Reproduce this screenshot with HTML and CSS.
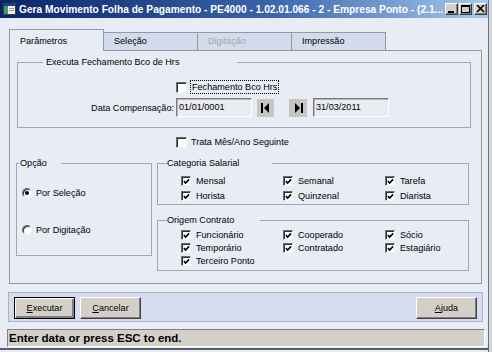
FILE: index.html
```html
<!DOCTYPE html>
<html lang="pt">
<head>
<meta charset="utf-8">
<title>Gera Movimento Folha de Pagamento</title>
<link rel="stylesheet" href="styles.css">
</head>
<body>
<div class="window">
  <div class="titlebar">
    <svg class="appicon" width="13" height="12" viewBox="0 0 13 12">
      <rect x="0.5" y="0.5" width="12" height="11" fill="#f4f4f4" stroke="#3c3c3c"/>
      <rect x="1" y="1" width="11" height="2" fill="#1c3c8c"/>
      <rect x="1" y="3" width="4" height="8" fill="#3f9a6a"/>
      <rect x="6" y="5" width="5" height="1" fill="#9a9a9a"/>
      <rect x="6" y="7" width="5" height="1" fill="#9a9a9a"/>
    </svg>
    <span class="title">Gera Movimento Folha de Pagamento - PE4000 - 1.02.01.066 - 2 - Empresa Ponto - (2.1...</span>
    <div class="ctrls">
      <span class="ctl"><svg width="9" height="8" viewBox="0 0 9 8"><rect x="1" y="6" width="6" height="2" fill="#000"/></svg></span>
      <span class="ctl"><svg width="9" height="8" viewBox="0 0 9 8"><rect x="0.5" y="0.5" width="8" height="7" fill="none" stroke="#000"/><rect x="0" y="0" width="9" height="2" fill="#000"/></svg></span>
      <span class="ctl ctl-close"><svg width="9" height="8" viewBox="0 0 9 8"><path d="M1 0 L8 7 M8 0 L1 7" stroke="#000" stroke-width="1.6"/></svg></span>
    </div>
  </div>

  <div class="client">
    <div class="tabs">
      <div class="tab active">Parâmetros</div>
      <div class="tab">Seleção</div>
      <div class="tab disabled">Digitação</div>
      <div class="tab">Impressão</div>
    </div>

    <div class="panel">
      <div class="group g-exec">
        <span class="legend lg-exec">Executa Fechamento Bco de Hrs</span>
        <div class="exec-grid">
          <span></span>
          <label class="chk big"><span class="cb"></span><span class="focus">Fechamento Bco Hrs</span></label>
          <span class="lbl">Data Compensação:</span>
          <div class="daterow">
            <span class="field">01/01/0001</span>
            <span class="navbtn nav-first"><svg width="9" height="10" viewBox="0 0 9 10"><rect x="0" y="0" width="2" height="10" fill="#000"/><path d="M8 0 L3 5 L8 10 Z" fill="#000"/></svg></span>
            <span class="navbtn nav-last"><svg width="9" height="10" viewBox="0 0 9 10"><path d="M1 0 L6 5 L1 10 Z" fill="#000"/><rect x="7" y="0" width="2" height="10" fill="#000"/></svg></span>
            <span class="field">31/03/2011</span>
          </div>
        </div>
      </div>

      <label class="chk big trata"><span class="cb"></span>Trata Mês/Ano Seguinte</label>

      <div class="lower">
        <div class="group g-opcao">
          <span class="legend lg-opcao">Opção</span>
          <label class="radio"><span class="rb on"></span>Por Seleção</label>
          <label class="radio"><span class="rb"></span>Por Digitação</label>
        </div>

        <div class="rightcol">
          <div class="group g-cat">
            <span class="legend lg-cat">Categoria Salarial</span>
            <div class="chkgrid rows-cat">
              <label class="chk"><span class="cb on"><svg viewBox="0 0 8 8"><path d="M1 3.6 L3 5.8 L7 1.6" /></svg></span>Mensal</label>
              <label class="chk"><span class="cb on"><svg viewBox="0 0 8 8"><path d="M1 3.6 L3 5.8 L7 1.6" /></svg></span>Semanal</label>
              <label class="chk"><span class="cb on"><svg viewBox="0 0 8 8"><path d="M1 3.6 L3 5.8 L7 1.6" /></svg></span>Tarefa</label>
              <label class="chk"><span class="cb on"><svg viewBox="0 0 8 8"><path d="M1 3.6 L3 5.8 L7 1.6" /></svg></span>Horista</label>
              <label class="chk"><span class="cb on"><svg viewBox="0 0 8 8"><path d="M1 3.6 L3 5.8 L7 1.6" /></svg></span>Quinzenal</label>
              <label class="chk"><span class="cb on"><svg viewBox="0 0 8 8"><path d="M1 3.6 L3 5.8 L7 1.6" /></svg></span>Diarista</label>
            </div>
          </div>

          <div class="group g-orig">
            <span class="legend lg-orig">Origem Contrato</span>
            <div class="chkgrid rows-orig">
              <label class="chk"><span class="cb on"><svg viewBox="0 0 8 8"><path d="M1 3.6 L3 5.8 L7 1.6" /></svg></span>Funcionário</label>
              <label class="chk"><span class="cb on"><svg viewBox="0 0 8 8"><path d="M1 3.6 L3 5.8 L7 1.6" /></svg></span>Cooperado</label>
              <label class="chk"><span class="cb on"><svg viewBox="0 0 8 8"><path d="M1 3.6 L3 5.8 L7 1.6" /></svg></span>Sócio</label>
              <label class="chk"><span class="cb on"><svg viewBox="0 0 8 8"><path d="M1 3.6 L3 5.8 L7 1.6" /></svg></span>Temporário</label>
              <label class="chk"><span class="cb on"><svg viewBox="0 0 8 8"><path d="M1 3.6 L3 5.8 L7 1.6" /></svg></span>Contratado</label>
              <label class="chk"><span class="cb on"><svg viewBox="0 0 8 8"><path d="M1 3.6 L3 5.8 L7 1.6" /></svg></span>Estagiário</label>
              <label class="chk"><span class="cb on"><svg viewBox="0 0 8 8"><path d="M1 3.6 L3 5.8 L7 1.6" /></svg></span>Terceiro Ponto</label>
            </div>
          </div>
        </div>
      </div>
    </div>

    <div class="buttonbar">
      <button class="btn default"><u>E</u>xecutar</button>
      <button class="btn"><u>C</u>ancelar</button>
      <span class="spacer"></span>
      <button class="btn"><u>A</u>juda</button>
    </div>

    <div class="status">Enter data or press ESC to end.</div>
    <div class="bottomedge"></div>
  </div>
</div>
</body>
</html>
```

FILE: styles.css
```css
* { box-sizing: border-box; }

html, body {
  margin: 0;
  padding: 0;
}

body {
  width: 492px;
  height: 352px;
  overflow: hidden;
  background: #d8dbe0;
  font-family: "Liberation Sans", Arial, sans-serif;
  font-size: 9.1px;
  color: #000;
}

.window {
  width: 492px;
  height: 352px;
  display: flex;
  flex-direction: column;
  background: #e8ecf4;
  border-right: 3px solid #d4d7dc;
  box-shadow: inset -1px 0 0 #6c7078;
  overflow: hidden;
}

/* ---------- title bar ---------- */
.titlebar {
  height: 18px;
  display: flex;
  align-items: center;
  padding-left: 3px;
  margin-right: 1px;
  background: linear-gradient(to right, #0a246a 0%, #3a64a8 55%, #a6caf0 100%);
}

.appicon {
  flex: none;
  margin-right: 3px;
}

.title {
  flex: 1;
  min-width: 0;
  white-space: nowrap;
  overflow: hidden;
  color: #fff;
  font-weight: bold;
  font-size: 10.2px;
}

.ctrls {
  display: flex;
  margin-right: 1px;
}

.ctl {
  width: 13px;
  height: 12px;
  display: flex;
  align-items: center;
  justify-content: center;
  background: #d4d0c8;
  border: 1px solid;
  border-color: #ffffff #404040 #404040 #ffffff;
  box-shadow: inset -1px -1px 0 #808080;
  margin-left: 1px;
}

.ctl-close {
  margin-left: 2px;
}

/* ---------- client ---------- */
.client {
  flex: 1;
  display: flex;
  flex-direction: column;
  padding: 11px 0 0 9px;
}

.tabs {
  height: 21px;
  display: flex;
  align-items: flex-end;
}

.tab {
  width: 95px;
  height: 18px;
  margin-left: -1px;
  padding: 2px 0 0 10px;
  line-height: 12px;
  background: #d3dbec;
  border: 1px solid #919b9c;
  border-bottom: none;
}

.tab.active {
  margin-left: 0;
  height: 22px;
  margin-bottom: -1px;
  padding-top: 5px;
  position: relative;
  z-index: 1;
  background: #e8ecf4;
}

.tab.disabled {
  color: #a3a7ae;
}

.panel {
  width: 473px;
  height: 234px;
  border: 1px solid #919b9c;
  background: #e8ecf4;
  display: flex;
  flex-direction: column;
}

/* ---------- group boxes ---------- */
.group {
  position: relative;
  border: 1px solid #a2a7b0;
}

.legend {
  position: absolute;
  top: -7px;
  height: 13px;
  line-height: 13px;
  background: #e8ecf4;
  white-space: nowrap;
}

.g-exec {
  margin: 11px 0 0 7px;
  width: 454px;
  height: 66px;
}

.lg-exec { left: 25px; width: 194px; padding-left: 3px; }

.exec-grid {
  display: grid;
  grid-template-columns: 158px auto;
  grid-template-rows: 16px 19px;
  row-gap: 3px;
  padding-top: 16px;
  align-items: center;
}

.lbl {
  text-align: right;
  padding-right: 2px;
}

.daterow {
  display: flex;
  align-items: center;
  height: 19px;
}

.field {
  width: 76px;
  height: 19px;
  line-height: 17px;
  padding-left: 2px;
  background: #e9ecf2;
  border: 1px solid;
  border-color: #7c7c7c #ffffff #ffffff #7c7c7c;
  box-shadow: inset 1px 1px 0 #b4b4b4;
}

.navbtn {
  width: 17px;
  height: 18px;
  display: flex;
  align-items: center;
  justify-content: center;
  background: #c6c6c6;
}

.nav-first { margin-left: 5px; }
.nav-last { margin-left: 15px; width: 18px; margin-right: 6px; }

/* ---------- checkboxes / radios ---------- */
.chk {
  display: flex;
  align-items: center;
  white-space: nowrap;
}

.cb {
  flex: none;
  width: 10px;
  height: 10px;
  margin-right: 5px;
  background: #fff;
  border: 1px solid;
  border-color: #6c6c6c #f4f4f4 #f4f4f4 #6c6c6c;
  box-shadow: inset 1px 1px 0 #303030;
  display: flex;
  align-items: center;
  justify-content: center;
}

.chk.big .cb {
  width: 11px;
  height: 11px;
  margin-right: 4px;
}

.cb svg {
  width: 7px;
  height: 7px;
  margin: 1px 0 0 1px;
}

.cb svg path {
  fill: none;
  stroke: #000;
  stroke-width: 1.8;
}

.focus {
  outline: 1px dotted #000;
  outline-offset: 0;
  padding: 0 1px;
  line-height: 12px;
}

.trata {
  margin: 6px 0 0 166px;
  height: 16px;
}

.lower {
  display: flex;
  align-items: flex-start;
  margin-top: 13px;
}

.g-opcao {
  margin-left: 6px;
  width: 136px;
  height: 93px;
  display: flex;
  flex-direction: column;
  gap: 23px;
  padding: 22px 0 0 5px;
}

.lg-opcao { left: 2px; width: 42px; padding-left: 1px; }

.radio {
  display: flex;
  align-items: center;
  height: 14px;
}

.rb {
  flex: none;
  width: 10px;
  height: 10px;
  margin-right: 4px;
  border-radius: 50%;
  background: #fff;
  border: 1px solid;
  border-color: #6c6c6c #f4f4f4 #f4f4f4 #6c6c6c;
  box-shadow: inset 1px 1px 0 #303030;
  display: flex;
  align-items: center;
  justify-content: center;
}

.rb.on::after {
  content: "";
  width: 4px;
  height: 4px;
  border-radius: 50%;
  background: #000;
}

.rightcol {
  margin-left: 5px;
  width: 312px;
  display: flex;
  flex-direction: column;
  gap: 15px;
}

.lg-cat { left: 9px; width: 105px; }
.lg-orig { left: 9px; width: 93px; }

.g-cat {
  height: 42px;
  padding: 9px 0 0 23px;
}

.g-orig {
  height: 51px;
  padding: 7px 0 0 23px;
}

.chkgrid {
  display: grid;
  grid-template-columns: 102px 102px 102px;
}

.rows-cat { grid-auto-rows: 15px; }
.rows-orig { grid-auto-rows: 13px; }

/* ---------- buttons ---------- */
.buttonbar {
  margin: 8px 0 0 -1px;
  width: 475px;
  height: 30px;
  display: flex;
  align-items: flex-start;
  gap: 5px;
  padding: 4px 5px 0 5px;
  background: #d4dcee;
  border: 1px solid #aab4c6;
}

.spacer { flex: 1; }

.btn {
  width: 61px;
  height: 22px;
  padding: 0;
  font-family: inherit;
  font-size: 9.1px;
  color: #000;
  background: #d4d0c8;
  border: 1px solid;
  border-color: #ffffff #404040 #404040 #ffffff;
  box-shadow: inset -1px -1px 0 #808080;
}

.btn.default {
  border: 1px solid #000;
  box-shadow: inset 1px 1px 0 #ffffff, inset -2px -2px 0 #808080;
}

/* ---------- status ---------- */
.status {
  margin: 7px 0 0 -2px;
  width: 478px;
  height: 18px;
  padding-left: 1px;
  line-height: 16px;
  font-size: 11.5px;
  font-weight: bold;
  white-space: nowrap;
  background: #d4d0c8;
  border: 1px solid;
  border-color: #808080 #ffffff #ffffff #808080;
}

.bottomedge {
  margin: 1px 0 0 -9px;
  height: 2px;
  width: 489px;
  background: #5a5e66;
}
```
